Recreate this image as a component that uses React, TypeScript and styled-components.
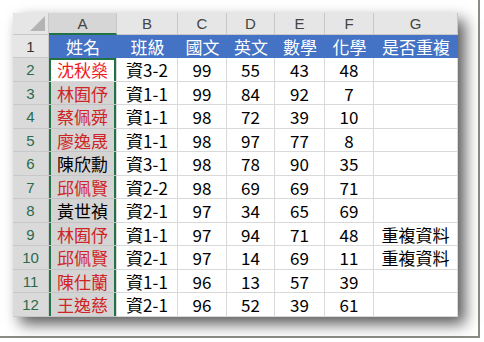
import styled, { createGlobalStyle } from "styled-components";

const GlobalStyle = createGlobalStyle`
  body {
    margin: 0;
    background: #fff;
    font-family: "Noto Sans CJK TC", "Noto Sans", sans-serif;
  }
`;

const Frame = styled.div`
  width: 480px;
  height: 338px;
  box-sizing: border-box;
  padding: 13px 0 0 13px;
  border-right: 2px solid #8b8d84;
  border-bottom: 2px solid #8b8d84;
  background: #fff;
`;

const Sheet = styled.div`
  display: grid;
  width: 445px;
  grid-template-columns: 36px 68px 61px 49px 48px 50px 49px 84px;
  grid-template-rows: 22px repeat(6, 23px 24px);
  background: #fff;
  box-shadow: 7px 7px 14px rgba(0, 0, 0, 0.65);
`;

const Corner = styled.div`
  position: relative;
  background: #e6e6e6;
  border-right: 1px solid #c8c8c8;
  border-bottom: 1px solid #c8c8c8;
  &::after {
    content: "";
    position: absolute;
    right: 3px;
    bottom: 3px;
    width: 0;
    height: 0;
    border-left: 15px solid transparent;
    border-bottom: 15px solid #b4b4b4;
  }
`;

const ColHead = styled.div<{ $sel?: boolean }>`
  display: flex;
  align-items: center;
  justify-content: center;
  box-sizing: border-box;
  background: ${(p) => (p.$sel ? "#d6d6d6" : "#e6e6e6")};
  border-right: 1px solid #c8c8c8;
  border-bottom: ${(p) => (p.$sel ? "2px solid #217346" : "1px solid #c8c8c8")};
  font-family: "Liberation Sans", "Noto Sans", sans-serif;
  font-size: 15px;
  color: #444;
`;

const RowHead = styled.div<{ $sel?: boolean }>`
  display: flex;
  align-items: center;
  justify-content: center;
  box-sizing: border-box;
  background: ${(p) => (p.$sel ? "#dadada" : "#e6e6e6")};
  border-right: 1px solid #c8c8c8;
  border-bottom: 1px solid #c8c8c8;
  font-family: "Liberation Sans", "Noto Sans", sans-serif;
  font-size: 15px;
  color: ${(p) => (p.$sel ? "#2b6a4c" : "#333")};
`;

const Title = styled.div`
  display: flex;
  align-items: center;
  justify-content: center;
  box-sizing: border-box;
  background: #4472c4;
  color: #fff;
  font-size: 17px;
  border-bottom: 1px solid #4472c4;
`;

const Cell = styled.div<{ $tone?: "red" | "brightRed" | "dark"; $shade?: boolean; $sel?: boolean; $top?: boolean }>`
  display: flex;
  align-items: center;
  justify-content: center;
  box-sizing: border-box;
  background: ${(p) => (p.$shade ? "#d4d4d4" : "#fff")};
  border-right: 1px solid #d9d9d9;
  border-bottom: 1px solid ${(p) => (p.$shade ? "#c4c4c4" : "#d9d9d9")};
  font-size: 17px;
  color: ${(p) =>
    p.$tone === "brightRed" ? "#f01c1c" : p.$tone === "red" ? "#d02424" : "#000"};
  white-space: nowrap;
  box-shadow: ${(p) =>
    p.$sel
      ? `inset 2px 0 0 #217346, inset -2px 0 0 #217346${p.$top ? ", inset 0 2px 0 #217346" : ""}`
      : "none"};
`;

type Row = { name: string; red: boolean; cls: string; s: number[]; dup?: string };

const rows: Row[] = [
  { name: "沈秋燊", red: true, cls: "資3-2", s: [99, 55, 43, 48] },
  { name: "林囿伃", red: true, cls: "資1-1", s: [99, 84, 92, 7] },
  { name: "蔡佩舜", red: true, cls: "資1-1", s: [98, 72, 39, 10] },
  { name: "廖逸晟", red: true, cls: "資1-1", s: [98, 97, 77, 8] },
  { name: "陳欣勳", red: false, cls: "資3-1", s: [98, 78, 90, 35] },
  { name: "邱佩賢", red: true, cls: "資2-2", s: [98, 69, 69, 71] },
  { name: "黃世禎", red: false, cls: "資2-1", s: [97, 34, 65, 69] },
  { name: "林囿伃", red: true, cls: "資1-1", s: [97, 94, 71, 48], dup: "重複資料" },
  { name: "邱佩賢", red: true, cls: "資2-1", s: [97, 14, 69, 11], dup: "重複資料" },
  { name: "陳仕蘭", red: true, cls: "資1-1", s: [96, 13, 57, 39] },
  { name: "王逸慈", red: true, cls: "資2-1", s: [96, 52, 39, 61] },
];

const letters = ["A", "B", "C", "D", "E", "F", "G"];
const titles = ["姓名", "班級", "國文", "英文", "數學", "化學", "是否重複"];

export default function App() {
  return (
    <>
      <GlobalStyle />
      <Frame>
        <Sheet>
          <Corner />
          {letters.map((l) => (
            <ColHead key={l} $sel={l === "A"}>
              {l}
            </ColHead>
          ))}
          <RowHead>1</RowHead>
          {titles.map((t) => (
            <Title key={t}>{t}</Title>
          ))}
          {rows.map((r, i) => (
            <Row key={i} r={r} n={i + 2} />
          ))}
        </Sheet>
      </Frame>
    </>
  );
}

function Row({ r, n }: { r: Row; n: number }) {
  const first = n === 2;
  const tone = r.red ? (first ? "brightRed" : "red") : "dark";
  return (
    <>
      <RowHead $sel>{n}</RowHead>
      <Cell $tone={tone} $shade={!first} $sel $top={first}>
        {r.name}
      </Cell>
      <Cell>{r.cls}</Cell>
      {r.s.map((v, j) => (
        <Cell key={j}>{v}</Cell>
      ))}
      <Cell>{r.dup ?? ""}</Cell>
    </>
  );
}
